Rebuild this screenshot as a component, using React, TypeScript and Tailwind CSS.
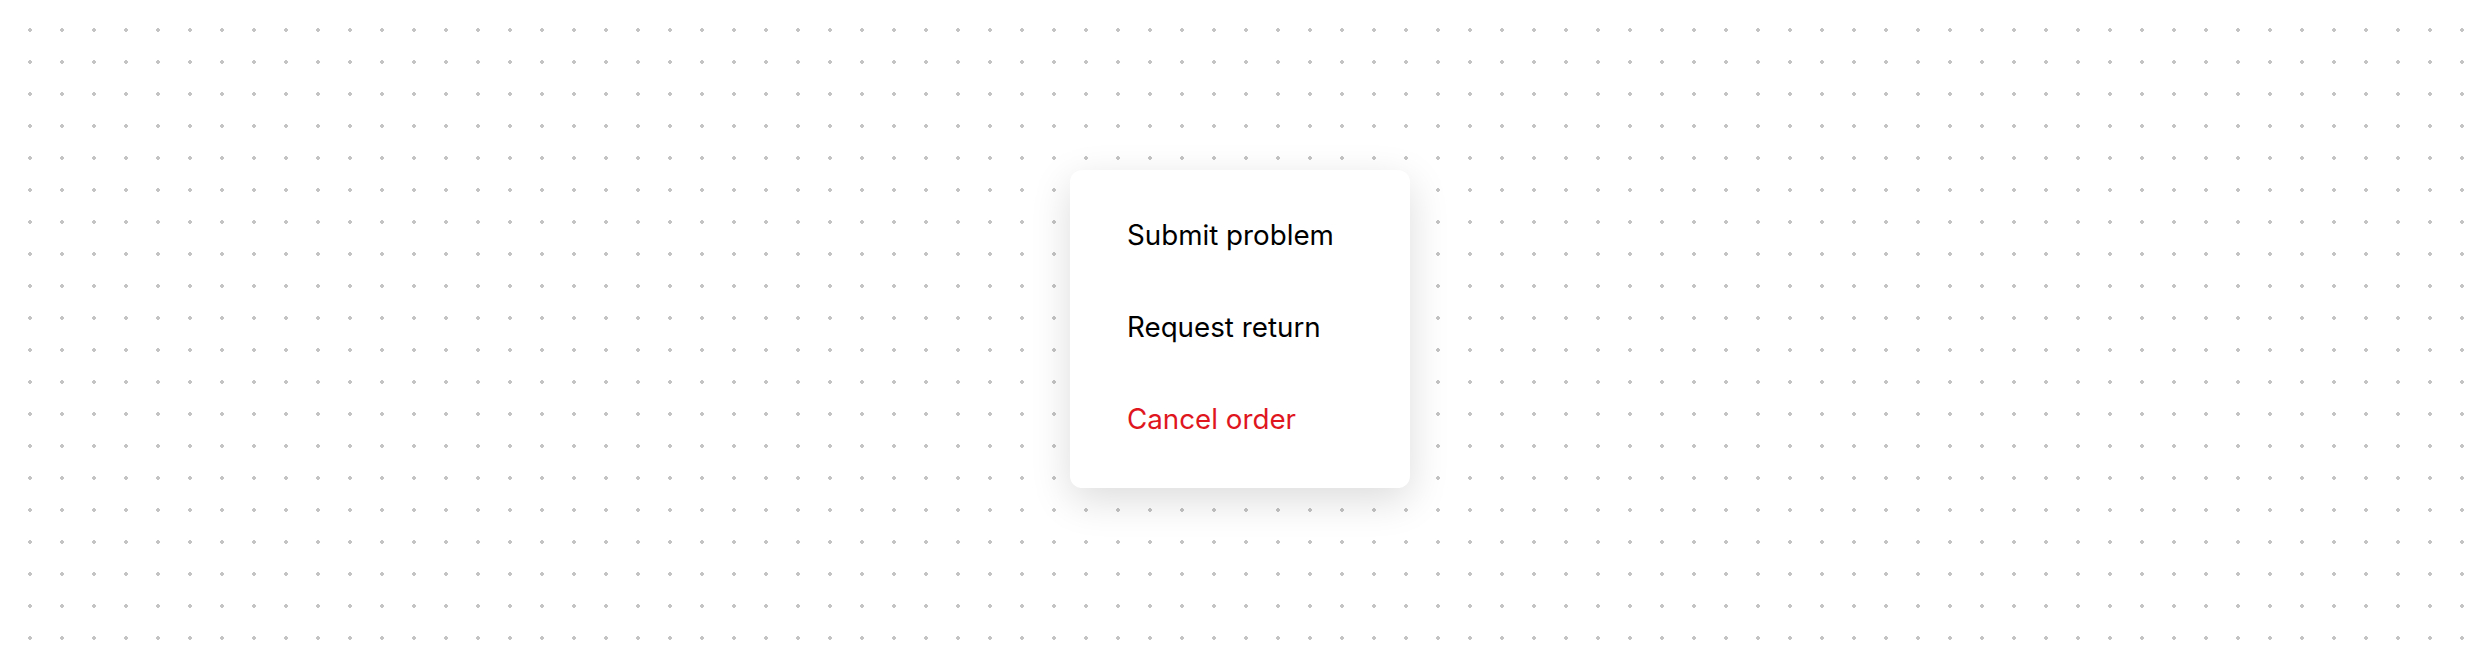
const items = [
  { label: "Submit problem", danger: false },
  { label: "Request return", danger: false },
  { label: "Cancel order", danger: true },
];

export default function App() {
  return (
    <div
      className="flex h-[656px] w-[2480px] items-start justify-center bg-white bg-[radial-gradient(circle,#c4c4c4_1.8px,transparent_2px)] bg-[size:32px_32px] bg-[position:14px_14px] pt-[170px]"
      style={{ fontFamily: "Inter, 'Noto Sans', sans-serif" }}
    >
      <div className="flex w-[340px] flex-col rounded-[12px] bg-white pt-[20px] pb-[22px] shadow-[0_12px_40px_rgba(0,0,0,0.14)]">
        {items.map((item) => (
          <button
            key={item.label}
            type="button"
            className={`flex h-[92px] items-center pl-[57px] text-left text-[27.75px] leading-none ${
              item.danger ? "text-[#e0161e]" : "text-black"
            }`}
          >
            {item.label}
          </button>
        ))}
      </div>
    </div>
  );
}
